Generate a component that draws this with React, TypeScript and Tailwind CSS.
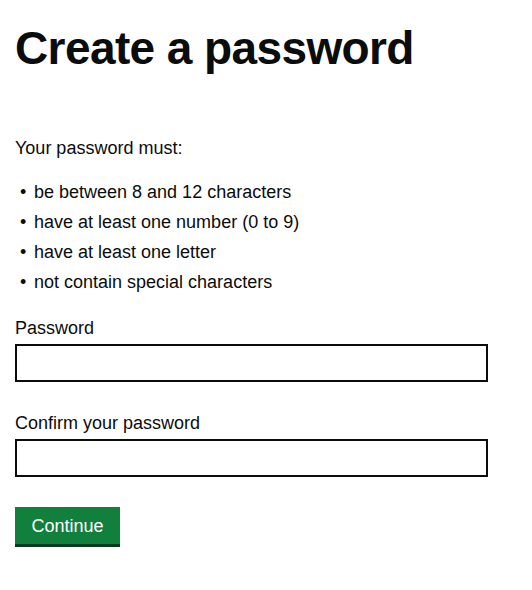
import React from "react";

const rules = [
  "be between 8 and 12 characters",
  "have at least one number (0 to 9)",
  "have at least one letter",
  "not contain special characters",
];

export default function App() {
  return (
    <div
      className="min-h-[590px] w-[532px] bg-white px-[15px] pt-[22px] text-[#0b0c0c]"
      style={{ fontFamily: '"Liberation Sans", Arial, sans-serif' }}
    >
      <h1 className="text-[46px] font-bold leading-[52px] tracking-[-0.6px]">Create a password</h1>

      <p className="mt-[62px] text-[18px] leading-[24px]">Your password must:</p>

      <ul className="mt-[20px] flex flex-col gap-[6px] text-[18px] leading-[24px]">
        {rules.map((r) => (
          <li key={r} className="flex items-start">
            <span className="w-[19px] pl-[5px]">•</span>
            <span>{r}</span>
          </li>
        ))}
      </ul>

      <div className="mt-[22px] w-[473px]">
        <label className="block text-[18px] leading-[24px]">Password</label>
        <input
          type="password"
          className="mt-[4px] block h-[38px] w-full border-2 border-[#0b0c0c] px-2 outline-none"
        />
      </div>

      <div className="mt-[29px] w-[473px]">
        <label className="block text-[18px] leading-[24px]">Confirm your password</label>
        <input
          type="password"
          className="mt-[4px] block h-[38px] w-full border-2 border-[#0b0c0c] px-2 outline-none"
        />
      </div>

      <button className="mt-[30px] h-[37px] w-[105px] bg-[#12803d] text-[18px] leading-none text-white shadow-[0_3px_0_#0b3b1f]">
        Continue
      </button>
    </div>
  );
}
